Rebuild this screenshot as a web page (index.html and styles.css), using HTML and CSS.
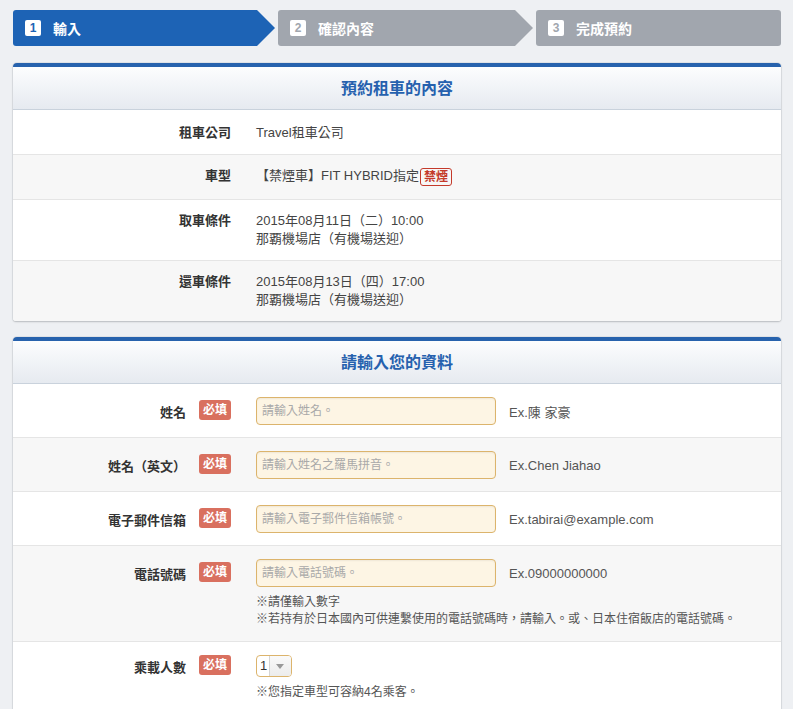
FILE: index.html
```html
<!DOCTYPE html>
<html lang="zh-Hant">
<head>
<meta charset="utf-8">
<title>預約租車</title>
<link rel="stylesheet" href="styles.css">
</head>
<body>
<div class="page">
  <ol class="steps">
    <li class="step step-active step-arrow"><span class="step-num">1</span>輸入</li>
    <li class="step step-arrow"><span class="step-num">2</span>確認內容</li>
    <li class="step"><span class="step-num">3</span>完成預約</li>
  </ol>

  <section class="card">
    <h2 class="card-title">預約租車的內容</h2>
    <div class="row">
      <div class="label">租車公司</div>
      <div class="value">Travel租車公司</div>
    </div>
    <div class="row row-alt">
      <div class="label">車型</div>
      <div class="value">【禁煙車】FIT HYBRID指定<span class="tag-nosmoke">禁煙</span></div>
    </div>
    <div class="row">
      <div class="label">取車條件</div>
      <div class="value">2015年08月11日（二）10:00<br>那覇機場店（有機場送迎）</div>
    </div>
    <div class="row row-alt">
      <div class="label">還車條件</div>
      <div class="value">2015年08月13日（四）17:00<br>那覇機場店（有機場送迎）</div>
    </div>
  </section>

  <section class="card">
    <h2 class="card-title">請輸入您的資料</h2>
    <div class="frow">
      <div class="flabel"><span>姓名</span><span class="req">必填</span></div>
      <div class="ffield">
        <div class="fline"><input class="txt" type="text" placeholder="請輸入姓名。"><span class="ex">Ex.陳 家豪</span></div>
      </div>
    </div>
    <div class="frow row-alt">
      <div class="flabel"><span>姓名（英文）</span><span class="req">必填</span></div>
      <div class="ffield">
        <div class="fline"><input class="txt" type="text" placeholder="請輸入姓名之羅馬拼音。"><span class="ex">Ex.Chen Jiahao</span></div>
      </div>
    </div>
    <div class="frow">
      <div class="flabel"><span>電子郵件信箱</span><span class="req">必填</span></div>
      <div class="ffield">
        <div class="fline"><input class="txt" type="text" placeholder="請輸入電子郵件信箱帳號。"><span class="ex">Ex.tabirai@example.com</span></div>
      </div>
    </div>
    <div class="frow row-alt">
      <div class="flabel"><span>電話號碼</span><span class="req">必填</span></div>
      <div class="ffield">
        <div class="fline"><input class="txt" type="text" placeholder="請輸入電話號碼。"><span class="ex">Ex.09000000000</span></div>
        <p class="note">※請僅輸入數字<br>※若持有於日本國內可供連繫使用的電話號碼時，請輸入。或、日本住宿飯店的電話號碼。</p>
      </div>
    </div>
    <div class="frow frow-sel">
      <div class="flabel"><span>乘載人數</span><span class="req">必填</span></div>
      <div class="ffield">
        <div class="fline"><span class="sel"><span class="sel-val">1</span><span class="sel-btn"></span></span></div>
        <p class="note">※您指定車型可容納4名乘客。</p>
      </div>
    </div>
  </section>
</div>
</body>
</html>
```

FILE: styles.css
```css
* { box-sizing: border-box; }
html, body { margin: 0; padding: 0; }
body {
  background: #eef0f3;
  font-family: "Liberation Sans", "Noto Sans CJK TC", sans-serif;
  font-size: 13px;
  color: #444;
}
.page {
  padding: 10px 12px 0 13px;
}

/* steps */
.steps {
  list-style: none;
  margin: 0 0 17px;
  padding: 0;
  display: grid;
  grid-template-columns: 262px 255px 1fr;
  gap: 3px;
  height: 36px;
}
.step {
  background: #a1a6ae;
  color: #fff;
  font-weight: bold;
  font-size: 14px;
  display: flex;
  align-items: center;
  padding-left: 12px;
  border-radius: 3px;
  height: 36px;
}
.step-arrow {
  clip-path: polygon(0 0, calc(100% - 18px) 0, 100% 50%, calc(100% - 18px) 100%, 0 100%);
}
.step-active { background: #1d63b5; }
.step-num {
  display: inline-flex;
  align-items: center;
  justify-content: center;
  width: 16px;
  height: 16px;
  background: #fff;
  color: #a1a6ae;
  border-radius: 2px;
  font-size: 12px;
  margin-right: 12px;
}
.step-active .step-num { color: #1d63b5; }

/* cards */
.card {
  background: #fff;
  border-top: 4px solid #2762ad;
  border-radius: 4px 4px 3px 3px;
  box-shadow: 0 1px 2px rgba(0,0,0,0.18), 0 0 0 1px #e1e4e8;
  margin-bottom: 16px;
  overflow: hidden;
}
.card-title {
  margin: 0;
  height: 43px;
  line-height: 43px;
  text-align: center;
  font-size: 16px;
  font-weight: bold;
  color: #2661ae;
  background: linear-gradient(#fcfdfe, #e6eaf0);
  border-bottom: 1px solid #c9d2dc;
}

.row {
  display: grid;
  grid-template-columns: 218px 1fr;
  column-gap: 25px;
  align-items: start;
  min-height: 45px;
  padding: 12px 0 12px;
  line-height: 18px;
  border-bottom: 1px solid #e5e5e5;
}
.row:last-child { border-bottom: 0; min-height: 44px; }
.row-alt { background: #f7f7f7; }
.label {
  text-align: right;
  font-weight: bold;
  color: #333;
}
.value { color: #444; }
.row:first-of-type .label, .row:first-of-type .value { padding-top: 2px; }
.tag-nosmoke {
  display: inline-block;
  border: 1px solid #c43a2b;
  color: #c43a2b;
  font-weight: bold;
  font-size: 12px;
  line-height: 16px;
  padding: 0 3px;
  border-radius: 3px;
  margin-left: 1px;
  vertical-align: middle;
}

/* form rows */
.frow {
  display: grid;
  grid-template-columns: 218px 1fr;
  column-gap: 25px;
  padding: 13px 0 12px;
  border-bottom: 1px solid #e5e5e5;
}
.frow:last-child { border-bottom: 0; }
.flabel {
  display: flex;
  justify-content: flex-end;
  align-items: center;
  height: 28px;
  gap: 13px;
  font-weight: bold;
  color: #333;
}
.req {
  display: inline-block;
  background: #d9705f;
  color: #fff;
  font-size: 12px;
  font-weight: bold;
  line-height: 20px;
  height: 20px;
  width: 32px;
  text-align: center;
  border-radius: 3px;
  margin-top: -2px;
}
.fline {
  display: flex;
  align-items: center;
  height: 28px;
}
.txt {
  width: 240px;
  height: 28px;
  border: 1px solid #dcb46c;
  background: #fdf5e4;
  border-radius: 4px;
  padding: 0 5px;
  font-family: inherit;
  font-size: 12px;
  color: #444;
  box-shadow: inset 0 1px 2px rgba(0,0,0,0.06);
  outline: none;
}
.txt::placeholder { color: #a9a9a9; }
.ex {
  margin-left: 13px;
  color: #555;
}
.note {
  margin: 7px 0 1px;
  font-size: 12px;
  line-height: 17px;
  color: #555;
}
.frow-sel .fline { height: 22px; }
.frow-sel .flabel { height: 22px; }
.sel {
  display: inline-flex;
  width: 36px;
  height: 22px;
  border: 1px solid #dcb46c;
  border-radius: 4px;
  overflow: hidden;
  background: #fff;
}
.sel-val {
  width: 13px;
  line-height: 20px;
  padding-left: 3px;
  color: #333;
  border-right: 1px solid #d5d5d5;
}
.sel-btn {
  flex: 1;
  background: linear-gradient(#fafafa, #ececec);
  position: relative;
}
.sel-btn::after {
  content: "";
  position: absolute;
  left: 6px;
  top: 8px;
  border-left: 4px solid transparent;
  border-right: 4px solid transparent;
  border-top: 5px solid #999;
}
```
